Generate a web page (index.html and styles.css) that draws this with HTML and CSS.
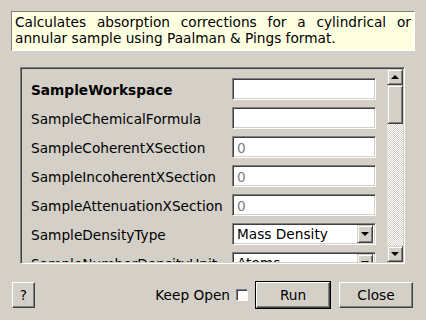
FILE: index.html
```html
<!DOCTYPE html>
<html lang="en">
<head>
    <meta charset="UTF-8">
    <title>CylinderPaalmanPingsCorrection</title>
    <link rel="stylesheet" href="styles.css">
</head>
<body>

<div class="desc">Calculates absorption corrections for a cylindrical or annular sample using Paalman &amp; Pings format.</div>

<div class="frame">
    <div class="view">
        <div class="grid">
            <span class="key bold">SampleWorkspace</span>
            <span class="field"></span>
            <span class="key">SampleChemicalFormula</span>
            <span class="field"></span>
            <span class="key">SampleCoherentXSection</span>
            <span class="field hint">0</span>
            <span class="key">SampleIncoherentXSection</span>
            <span class="field hint">0</span>
            <span class="key">SampleAttenuationXSection</span>
            <span class="field hint">0</span>
            <span class="key">SampleDensityType</span>
            <span class="field combo">Mass Density<span class="drop"><i class="down"></i></span></span>
            <span class="key">SampleNumberDensityUnit</span>
            <span class="field combo">Atoms<span class="drop"><i class="down"></i></span></span>
        </div>
    </div>
    <div class="scroll">
        <span class="arrow"><i class="up"></i></span>
        <span class="thumb"></span>
        <span class="track"></span>
        <span class="arrow"><i class="down"></i></span>
    </div>
</div>

<div class="bar">
    <span class="btn help">?</span>
    <span class="fill"></span>
    <span class="keep">Keep Open</span>
    <span class="check"></span>
    <span class="btn run"><span class="face">Run</span></span>
    <span class="btn close">Close</span>
</div>

</body>
</html>
```

FILE: styles.css
```css
*{padding:0;margin:0;box-sizing:border-box;}
body{background:#d4d0c8;font-family:"DejaVu Sans",sans-serif;font-size:13.7px;color:#000;width:426px;height:320px;overflow:hidden;}

.desc{margin:11px 0 0 11px;width:404px;height:40px;padding:2px 3px 0 3px;background:#ffffe1;border:1px solid;border-color:#808080 #fff #fff #808080;line-height:16px;text-align:justify;}

.frame{margin:16px 0 0 20px;width:385px;height:197px;display:flex;border:1px solid;border-color:#808080 #fff #fff #808080;box-shadow:inset 1px 1px #404040,inset -1px -1px #d4d0c8;padding:1px;}
.view{flex:1;overflow:hidden;padding:9px 0 0 9px;}
.grid{display:grid;grid-template-columns:201px 144px;row-gap:7px;align-items:center;}
.key{white-space:nowrap;line-height:20px;padding-top:2px;}
.bold{font-weight:bold;}

.field{display:flex;align-items:center;height:22px;padding:1px 4px 0 4px;background:#fff;border:1px solid;border-color:#808080 #fff #fff #808080;box-shadow:inset 1px 1px #404040,inset -1px -1px #d4d0c8;}
.hint{color:#808080;}
.combo{justify-content:space-between;padding:0 2px 0 4px;}
.drop{width:16px;height:18px;display:flex;align-items:center;justify-content:center;background:#d4d0c8;border:1px solid;border-color:#d4d0c8 #404040 #404040 #d4d0c8;box-shadow:inset 1px 1px #fff,inset -1px -1px #808080;}

.scroll{width:16px;display:flex;flex-direction:column;}
.arrow{height:16px;display:flex;align-items:center;justify-content:center;background:#d4d0c8;border:1px solid;border-color:#d4d0c8 #404040 #404040 #d4d0c8;box-shadow:inset 1px 1px #fff,inset -1px -1px #808080;}
.thumb{height:39px;background:#d4d0c8;border:1px solid;border-color:#d4d0c8 #404040 #404040 #d4d0c8;box-shadow:inset 1px 1px #fff,inset -1px -1px #808080;}
.track{flex:1;background:repeating-conic-gradient(#fff 0 25%,#d4d0c8 0 50%) 0 0/2px 2px;}
.up{width:0;height:0;border-left:4px solid transparent;border-right:4px solid transparent;border-bottom:4px solid #000;}
.down{width:0;height:0;border-left:4px solid transparent;border-right:4px solid transparent;border-top:4px solid #000;}

.bar{display:flex;align-items:center;margin-top:17px;padding:0 13px 0 12px;height:27px;}
.fill{flex:1;}
.btn{display:flex;align-items:center;justify-content:center;height:26px;background:#d4d0c8;border:1px solid;border-color:#fff #404040 #404040 #fff;box-shadow:inset -1px -1px #808080;}
.help{width:23px;}
.keep{margin-right:6px;}
.check{width:12px;height:12px;margin-right:7px;background:#fff;border:1px solid;border-color:#808080 #fff #fff #808080;box-shadow:inset 1px 1px #404040;}
.run{width:76px;height:28px;border:1px solid #000;box-shadow:none;margin-right:8px;}
.run .face{display:flex;align-items:center;justify-content:center;width:100%;height:100%;border:1px solid;border-color:#fff #404040 #404040 #fff;box-shadow:inset -1px -1px #808080;}
.close{width:74px;}
```
